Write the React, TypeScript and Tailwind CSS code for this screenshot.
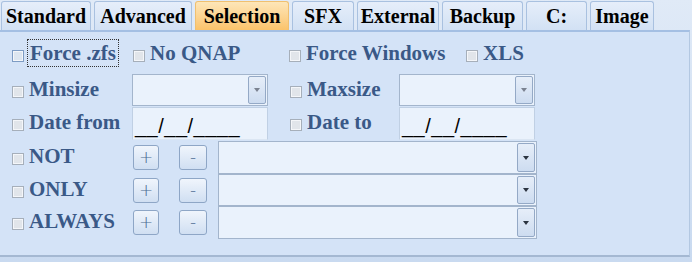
import React from "react";

const serif = "font-['Liberation_Serif','Times_New_Roman',serif]";

const tabs = [
  { name: "Standard", w: "w-[90px]" },
  { name: "Advanced", w: "w-[98px]" },
  { name: "Selection", w: "w-[94px]", active: true },
  { name: "SFX", w: "w-[62px]" },
  { name: "External", w: "w-[82px]" },
  { name: "Backup", w: "w-[81px]" },
  { name: "C:", w: "w-[61px]" },
  { name: "Image", w: "w-[64px]" },
];

const Box = ({ focus }: { focus?: boolean }) => (
  <span
    className={`inline-block w-[12px] h-[12px] shrink-0 border mt-[3px] shadow-[inset_0_0_0_1px_#f4f6f9] ${
      focus ? "border-[#7d9cc4] bg-[#dde6f0]" : "border-[#a6afba] bg-[#e1e5ea]"
    }`}
  />
);

const Label = ({ text, focus }: { text: string; focus?: boolean }) => (
  <span
    className={`${serif} text-[21px] font-bold text-[#3a5987] leading-[22px] mb-[3px] whitespace-nowrap ${
      focus ? "ml-[3px] px-[2px] border border-dotted border-[#333] py-[2px]" : "ml-[5px]"
    }`}
  >
    {text}
  </span>
);

const Check = ({ text, w, focus }: { text: string; w: string; focus?: boolean }) => (
  <div className={`flex items-center shrink-0 ${w}`}>
    <Box focus={focus} />
    <Label text={text} focus={focus} />
  </div>
);

const Arrow = ({ dark }: { dark?: boolean }) => (
  <span className="absolute right-[1px] top-[1px] bottom-[1px] w-[18px] rounded-[2px] border border-[#94a9c6] bg-gradient-to-b from-[#e6eef9] to-[#cddcf0] flex items-center justify-center">
    <span
      className={`w-0 h-0 border-l-[3px] border-r-[3px] border-t-[4px] border-l-transparent border-r-transparent ${
        dark ? "border-t-[#2b3440]" : "border-t-[#7a8290]"
      }`}
    />
  </span>
);

const Select = ({ w, h, dark }: { w: string; h: string; dark?: boolean }) => (
  <div className={`relative shrink-0 ${w} ${h} bg-[#eaf2fc] border border-[#a3b5cc]`}>
    <Arrow dark={dark} />
  </div>
);

const DateInput = () => (
  <div className="shrink-0 w-[136px] h-[33px] bg-[#eaf2fc] border border-[#c0d0e4] border-b-[#dbe6f3] pl-[2px] flex items-end">
    <span className="font-['Liberation_Sans',Arial,sans-serif] text-[20px] text-black leading-[26px] tracking-[0.5px]">
      __/__/____
    </span>
  </div>
);

const Btn = ({ ch, w }: { ch: string; w: string }) => (
  <div
    className={`font-['DejaVu_Sans',sans-serif] shrink-0 ${w} h-[25px] rounded-[3px] border border-[#8ea6c6] bg-gradient-to-b from-[#f0f5fc] to-[#d0dff2] flex items-center justify-center text-[#4b6a90] text-[17px] font-light leading-none`}
  >
    {ch}
  </div>
);

const ListRow = ({ text, h, mt }: { text: string; h: string; mt: string }) => (
  <div className={`flex items-center pl-[12px] ${h} ${mt}`}>
    <Check text={text} w="w-[121px]" />
    <Btn ch="+" w="w-[26px]" />
    <div className="w-[20px] shrink-0" />
    <Btn ch="-" w="w-[28px]" />
    <div className="w-[11px] shrink-0" />
    <Select w="w-[319px]" h={h} dark />
  </div>
);

export default function App() {
  return (
    <div className="w-[692px] h-[262px] overflow-hidden bg-gradient-to-b from-[#e0eaf7] to-[#c9daf0] flex flex-col">
      {/* tabs */}
      <div className="flex gap-[3px] pl-[1px] pt-[1px] h-[30px] shrink-0">
        {tabs.map((t) => (
          <div
            key={t.name}
            className={`${serif} ${t.w} h-[29px] rounded-t-[3px] border border-b-0 flex items-center justify-center text-[20px] font-bold text-black leading-none ${
              t.active
                ? "border-[#f0c070] bg-gradient-to-b from-[#fde6b8] to-[#fbc36a]"
                : "border-[#a9c1e0] bg-gradient-to-b from-[#e6eefa] to-[#d2e1f4]"
            }`}
          >
            {t.name}
          </div>
        ))}
      </div>

      {/* panel */}
      <div className="w-[690px] h-[227px] shrink-0 bg-[#d4e3f7] border-t-2 border-t-[#a4bfe3] border-r border-r-[#b3c8e2] border-b-2 border-b-[#a4b8d2]">
        <div className="flex items-center pl-[12px] h-[29px] mt-[8px]">
          <Check text="Force .zfs" w="w-[121px]" focus />
          <Check text="No QNAP" w="w-[156px]" />
          <Check text="Force Windows" w="w-[177px]" />
          <Check text="XLS" w="w-[100px]" />
        </div>

        <div className="flex items-center pl-[12px] h-[32px] mt-[5px]">
          <Check text="Minsize" w="w-[120px]" />
          <Select w="w-[136px]" h="h-[32px]" />
          <div className="w-[22px] shrink-0" />
          <Check text="Maxsize" w="w-[109px]" />
          <Select w="w-[136px]" h="h-[32px]" />
        </div>

        <div className="flex items-center pl-[12px] h-[33px] mt-[1px]">
          <Check text="Date from" w="w-[120px]" />
          <DateInput />
          <div className="w-[22px] shrink-0" />
          <Check text="Date to" w="w-[109px]" />
          <DateInput />
        </div>

        <ListRow text="NOT" h="h-[33px]" mt="mt-[1px]" />
        <ListRow text="ONLY" h="h-[32px]" mt="mt-0" />
        <ListRow text="ALWAYS" h="h-[33px]" mt="mt-0" />
      </div>
    </div>
  );
}
